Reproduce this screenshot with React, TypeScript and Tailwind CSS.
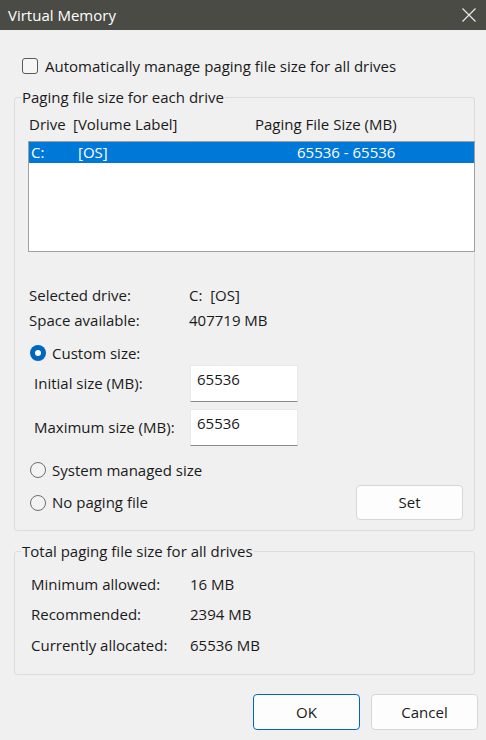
import React from "react";

function Radio({ checked }: { checked?: boolean }) {
  if (checked) {
    return (
      <span className="flex h-[16px] w-[16px] items-center justify-center rounded-full bg-[#0067c0]">
        <span className="h-[6px] w-[6px] rounded-full bg-white" />
      </span>
    );
  }
  return <span className="h-[16px] w-[16px] rounded-full border border-[#6e6e6e] bg-[#f3f3f3]" />;
}

function Field({ value }: { value: string }) {
  return (
    <div className="h-[37px] w-[108px] border border-[#e9e9e9] border-b-[#8a8a8a] bg-white px-[6px] pt-[3px] leading-[20px]">
      {value}
    </div>
  );
}

export default function App() {
  return (
    <div
      className="h-[740px] w-[486px] bg-[#f0f0f0] text-[15px] text-[#1a1a1a]"
      style={{ fontFamily: '"Segoe UI", "Open Sans", "Noto Sans", sans-serif' }}
    >
      {/* Title bar */}
      <div className="flex h-[30px] items-center justify-between bg-[#4b4b45] pl-[8px] pr-[9px] text-white">
        <span className="text-[15px] leading-[20px]">Virtual Memory</span>
        <svg width="16" height="16" viewBox="0 0 16 16" className="text-[#e8e8e8]">
          <path d="M1.5 1.5 L14.5 14.5 M14.5 1.5 L1.5 14.5" stroke="currentColor" strokeWidth="1.2" />
        </svg>
      </div>

      <div className="pl-[14px] pr-[11px]">
        {/* Automatic checkbox */}
        <div className="mt-[26px] flex h-[20px] items-center gap-[7px] pl-[8px] leading-[20px]">
          <span className="h-[16px] w-[16px] rounded-[3px] border border-[#5a5a5a] bg-[#f6f6f6]" />
          <span>Automatically manage paging file size for all drives</span>
        </div>

        {/* Paging file size for each drive */}
        <fieldset className="mt-[11px] rounded-[3px] border border-[#dcdcdc] pb-[10px]">
          <legend className="ml-[6px] px-[1px] leading-[20px]">Paging file size for each drive</legend>

          <div className="pl-[13px]">
            <div className="mt-[7px] flex h-[20px] pl-[1px] leading-[20px]">
              <span className="w-[44px]">Drive</span>
              <span className="w-[182px]">[Volume Label]</span>
              <span>Paging File Size (MB)</span>
            </div>

            <div className="-mr-px mt-[7px] h-[111px] border border-[#a0a0a0] bg-white">
              <div className="flex h-[21px] items-center bg-[#0078d7] pl-[2px] text-white">
                <span className="w-[47px]">C:</span>
                <span className="w-[219px]">[OS]</span>
                <span>65536 - 65536</span>
              </div>
            </div>

            <div className="mt-[33px] flex h-[20px] items-center pl-[1px]">
              <span className="w-[160px]">Selected drive:</span>
              <span>C:&nbsp; [OS]</span>
            </div>
            <div className="mt-[5px] flex h-[20px] items-center pl-[1px]">
              <span className="w-[160px]">Space available:</span>
              <span>407719 MB</span>
            </div>

            <div className="mt-[13px] flex h-[20px] items-center gap-[6px] pl-[2px]">
              <Radio checked />
              <span>Custom size:</span>
            </div>

            <div className="mt-[2px] flex items-center">
              <span className="w-[162px] pl-[6px]">Initial size (MB):</span>
              <Field value="65536" />
            </div>
            <div className="mt-[7px] flex items-center">
              <span className="w-[162px] pl-[6px]">Maximum size (MB):</span>
              <Field value="65536" />
            </div>

            <div className="mt-[14px] flex h-[20px] items-center gap-[6px] pl-[2px]">
              <Radio />
              <span>System managed size</span>
            </div>

            <div className="mt-[5px] flex h-[35px] items-center justify-between pr-[11px]">
              <div className="flex items-center gap-[6px] pl-[2px]">
                <Radio />
                <span>No paging file</span>
              </div>
              <button className="h-[35px] w-[107px] rounded-[4px] border border-[#d6d6d6] bg-[#fdfdfd]">Set</button>
            </div>
          </div>
        </fieldset>

        {/* Total paging file size */}
        <fieldset className="mt-[10px] rounded-[3px] border border-[#dcdcdc] pb-[19px]">
          <legend className="ml-[6px] px-[1px] leading-[20px]">Total paging file size for all drives</legend>
          <div className="pl-[16px]">
            <div className="mt-[13px] flex h-[20px] items-center">
              <span className="w-[159px]">Minimum allowed:</span>
              <span>16 MB</span>
            </div>
            <div className="mt-[10px] flex h-[20px] items-center">
              <span className="w-[159px]">Recommended:</span>
              <span>2394 MB</span>
            </div>
            <div className="mt-[11px] flex h-[20px] items-center">
              <span className="w-[159px]">Currently allocated:</span>
              <span>65536 MB</span>
            </div>
          </div>
        </fieldset>
      </div>

      {/* Dialog buttons */}
      <div className="mt-[19px] flex justify-end gap-[11px] pr-[8px]">
        <button className="h-[36px] w-[107px] rounded-[4px] border border-[#0067c0] bg-[#fdfdfd]">OK</button>
        <button className="h-[36px] w-[107px] rounded-[4px] border border-[#d6d6d6] bg-[#fdfdfd]">Cancel</button>
      </div>
    </div>
  );
}
